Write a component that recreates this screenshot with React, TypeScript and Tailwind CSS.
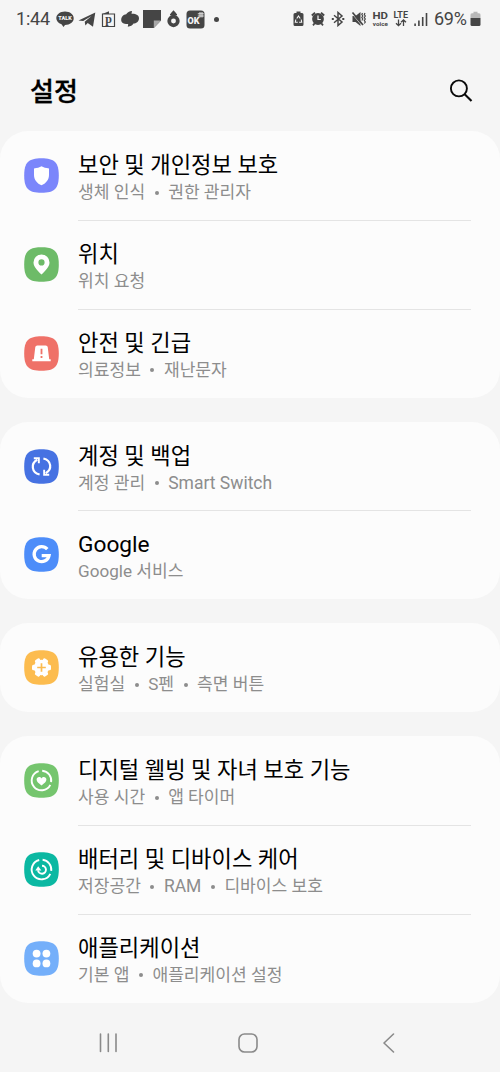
import React from 'react';

type Item = {
  title: string;
  parts: string[];
  color: string;
  icon: React.ReactNode;
};

const ICONS = {
  shield: <path fill="#fff" d="M17.500 8.300C19.500 9.600 22 10.200 25 10.400V17c0 5-3.300 8.500-7.500 10.300C13.300 25.500 10 22 10 17v-6.600c3-.2 5.500-.8 7.500-2.100z" />,
  pin: <path fill="#fff" fillRule="evenodd" d="M17.500 7.400a8 8 0 0 1 8 8c0 4.600-4.300 8.300-8 12.100-3.700-3.800-8-7.500-8-12.100a8 8 0 0 1 8-8zm0 4.900a3.100 3.100 0 1 0 0 6.200 3.100 3.100 0 0 0 0-6.200z" />,
  siren: (
    <>
      <path fill="#fff" d="M13.300 9.400h8.400a2 2 0 0 1 2 1.700l1.500 12.200h1.500v1.900H8.300v-1.900h1.500l1.500-12.200a2 2 0 0 1 2-1.700z" />
      <path stroke="#ef7168" strokeWidth="1.800" d="M17.500 12.800v5.500M17.500 20v1.900" />
    </>
  ),
  sync: (
    <>
      <g fill="none" stroke="#fff" strokeWidth="2.200">
        <path d="M15.600 25.500C7.500 23.500 6.500 14.500 13.300 10.800" />
        <path d="M19.400 9.500c8.100 2 9.100 11 2.300 14.700" />
      </g>
      <path fill="#fff" d="M9.800 8.300h6v6h-1.900v-4.100H9.800zM25.200 26.700h-6v-6h1.900v4.100h4.100z" />
    </>
  ),
  google: (
    <path fill="none" stroke="#fff" strokeWidth="3.300" d="M23.300 12.200A7.500 7.500 0 1 0 25 18.600H17.700" />
  ),
  flower: (
    <>
      <g fill="#fff">
        <circle cx="17.500" cy="17.500" r="7.700" />
        <rect x="14.700" y="8" width="5.600" height="19" rx="1.500" transform="rotate(30 17.500 17.500)" />
        <rect x="14.700" y="8" width="5.600" height="19" rx="1.500" transform="rotate(90 17.500 17.500)" />
        <rect x="14.700" y="8" width="5.600" height="19" rx="1.500" transform="rotate(150 17.500 17.500)" />
      </g>
      <path stroke="#fcbc4f" strokeWidth="1.700" d="M17.500 13.200v8.600M13.200 17.500h8.600" />
    </>
  ),
  wellbeing: (
    <>
      <g fill="none" stroke="#fff" strokeWidth="1.900">
        <path d="M14.700 8.100A9.800 9.800 0 1 0 26.300 21.800" />
        <path d="M18.200 7.700A9.800 9.800 0 0 1 27.100 19.200" />
      </g>
      <path fill="#fff" d="M17.500 22.500c-3-2.200-4.900-3.700-4.900-5.900 0-2.800 3.500-3.500 4.900-1.200 1.400-2.300 4.900-1.600 4.900 1.200 0 2.200-1.900 3.700-4.900 5.900z" />
    </>
  ),
  care: (
    <>
      <g fill="none" stroke="#fff" strokeWidth="1.900">
        <path d="M15.200 8A9.800 9.800 0 1 0 26.300 21.800" />
        <path d="M18.600 7.800A9.800 9.800 0 0 1 27.200 18.800" />
        <path d="M18 13.700a4 4 0 1 1-4 4.600" />
      </g>
      <path fill="#fff" d="M14.200 14.300l3.200 4.300h-6.100z" />
    </>
  ),
  apps: (
    <g fill="#fff">
      <circle cx="12.600" cy="12.600" r="3.900" />
      <circle cx="22.400" cy="12.600" r="3.900" />
      <circle cx="12.600" cy="22.400" r="3.900" />
      <circle cx="22.400" cy="22.400" r="3.900" />
    </g>
  ),
};

const GROUPS: Item[][] = [
  [
    { title: '보안 및 개인정보 보호', parts: ['생체 인식', '권한 관리자'], color: '#7b86fb', icon: ICONS.shield },
    { title: '위치', parts: ['위치 요청'], color: '#6dbb68', icon: ICONS.pin },
    { title: '안전 및 긴급', parts: ['의료정보', '재난문자'], color: '#ef7168', icon: ICONS.siren },
  ],
  [
    { title: '계정 및 백업', parts: ['계정 관리', 'Smart Switch'], color: '#4672e2', icon: ICONS.sync },
    { title: 'Google', parts: ['Google 서비스'], color: '#4d8df9', icon: ICONS.google },
  ],
  [{ title: '유용한 기능', parts: ['실험실', 'S펜', '측면 버튼'], color: '#fcbc4f', icon: ICONS.flower }],
  [
    { title: '디지털 웰빙 및 자녀 보호 기능', parts: ['사용 시간', '앱 타이머'], color: '#75c56e', icon: ICONS.wellbeing },
    { title: '배터리 및 디바이스 케어', parts: ['저장공간', 'RAM', '디바이스 보호'], color: '#0bb8a2', icon: ICONS.care },
    { title: '애플리케이션', parts: ['기본 앱', '애플리케이션 설정'], color: '#74affa', icon: ICONS.apps },
  ],
];

const isLatin = (text: string) => /^[A-Za-z ]+$/.test(text);

const StatusBar = () => (
  <div className="h-[38px] flex items-center pl-[16px] pr-[19px] text-[#454545]">
    <span className="w-[40px] text-[18px] leading-none tracking-[-0.2px]">1:44</span>
    <svg width="18" height="18" viewBox="0 0 18 18" fill="currentColor">
      <path d="M9 1.500c5 0 8.700 2.900 8.700 6.700S14 14.900 9 14.900L7.500 17l-2-2.700C2.200 12.900.3 10.800.3 8.200.3 4.400 4 1.500 9 1.500z" />
      <text x="9" y="10.300" textAnchor="middle" fontSize="5.500" fontWeight="900" fill="#f5f5f5">TALK</text>
    </svg>
    <svg className="ml-[4px]" width="18" height="18" viewBox="0 0 18 18" fill="currentColor">
      <path d="M.5 10.500 17.300 2.500 15 16.700 9.700 13 7.400 15.600 6.700 11.800 13.500 6 5.200 11z" />
    </svg>
    <svg className="ml-[5px]" width="15" height="18" viewBox="0 0 15 18">
      <path d="M1.500 4h12v12.500h-12z" fill="none" stroke="currentColor" strokeWidth="1.200" />
      <path d="M1.300 4 8 1.300V4z" fill="currentColor" />
      <text x="7.500" y="13" textAnchor="middle" fontFamily="Liberation Serif" fontSize="12" fontWeight="700" fill="currentColor">p</text>
    </svg>
    <svg className="ml-[5px]" width="18" height="18" viewBox="0 0 18 18" fill="currentColor">
      <path d="M11 1 10.500 3.800C15 3.600 18 5.200 18 8.200c0 3.500-3 5.200-5.500 5.400-1 1.700-3 2.900-5.700 3.200l.4-2.800C3 14.200.2 12.900.2 10c0-3.500 2.300-5.300 5-5.700C6.300 2.200 8.500 1.200 11 1z" />
    </svg>
    <svg className="ml-[4px]" width="18" height="18" viewBox="0 0 18 18">
      <path d="M0 0h18v10.500L10.800 18H0z" fill="currentColor" />
      <path d="M10.800 18v-7.500H18z" fill="#a8a8a8" />
    </svg>
    <svg className="ml-[5px]" width="15" height="18" viewBox="0 0 15 18">
      <path d="M7.500.3 10 3v2.300H5V3z" fill="currentColor" />
      <path d="M4 4.500h7" stroke="currentColor" strokeWidth="1.600" />
      <circle cx="7.500" cy="11" r="4.300" fill="none" stroke="currentColor" strokeWidth="3.700" />
    </svg>
    <svg className="ml-[5px]" width="19" height="19" viewBox="0 0 19 19">
      <rect x=".5" y=".5" width="18" height="18" rx="3.500" fill="currentColor" />
      <text x="7.500" y="13.800" textAnchor="middle" fontSize="9" fontWeight="900" fill="#f5f5f5">OK</text>
      <path d="M14 2v5.500M16 2v5.500M11.800 3.800h6M11.800 6h6" stroke="#f5f5f5" strokeWidth=".9" />
    </svg>
    <span className="ml-[9px] w-[5px] h-[5px] rounded-full bg-[#454545]" />

    <svg className="ml-auto" width="11" height="16" viewBox="0 0 11 16">
      <path d="M3.500.5h4V2H9a1.500 1.500 0 0 1 1.500 1.500v10A1.500 1.500 0 0 1 9 15H2A1.500 1.500 0 0 1 .5 13.500v-10A1.500 1.500 0 0 1 2 2h1.500z" fill="currentColor" />
      <path d="M3.800 7.500l1.700-2.600 1.700 2.600M8.200 8.500l.5 2.700-2.600.1M4.800 11.300l-2.500-.1.500-2.700" fill="none" stroke="#f5f5f5" strokeWidth="1.100" />
    </svg>
    <svg className="ml-[7px]" width="14" height="16" viewBox="0 0 14 16">
      <circle cx="7" cy="8" r="5.900" fill="currentColor" />
      <path d="M.8 4.500 4 1.600M13.200 4.500 10 1.600M3.500 12.500 2 14.300M10.500 12.500 12 14.300" stroke="currentColor" strokeWidth="1.800" />
      <path d="M7 4.500v4h2.800" fill="none" stroke="#f5f5f5" strokeWidth="1.200" />
    </svg>
    <svg className="ml-[6px]" width="14" height="16" viewBox="0 0 14 16" fill="none" stroke="currentColor" strokeWidth="1.500">
      <path d="M3 4.300l8 6.700-4 3.500v-13L11 5l-8 6.700" />
      <path d="M.8 8h2M11.300 8h2" strokeWidth="2" />
    </svg>
    <svg className="ml-[6px]" width="16" height="16" viewBox="0 0 16 16">
      <path d="M1.500 5H4.500L9.500 1v14L4.500 11H1.500z" fill="currentColor" />
      <path d="M1 2.700 10.800 14.500" stroke="#f5f5f5" strokeWidth=".7" />
      <path d="M1.500 1.500 12 14" stroke="currentColor" strokeWidth="1.700" />
      <path d="M11.500 2l-.7 1.500 1 1.500-1 1.500 1 1.500-1 1.500M14 2l-.7 1.500 1 1.500-1 1.500 1 1.500-1 1.500 1 1.500-1 1.500" fill="none" stroke="currentColor" strokeWidth="1.200" />
    </svg>
    <svg className="ml-[5px]" width="17" height="20" viewBox="0 0 17 20" fill="currentColor">
      <text x=".5" y="9.800" fontSize="9.500" fontWeight="700" textLength="15.500" lengthAdjust="spacingAndGlyphs">HD</text>
      <text x=".8" y="16.600" fontSize="5.800" fontWeight="700" textLength="15" lengthAdjust="spacingAndGlyphs">voice</text>
    </svg>
    <svg className="ml-[4px]" width="16" height="18" viewBox="0 0 16 18" fill="currentColor">
      <text x=".5" y="8.300" fontSize="8.500" fontWeight="700" textLength="14.500" lengthAdjust="spacingAndGlyphs">LTE</text>
      <path d="M5.500 9.500v6M3 13.300l2.500 2.400L8 13.300M10.500 16V10M8 12.200l2.500-2.400 2.500 2.400" fill="none" stroke="currentColor" strokeWidth="1.300" />
    </svg>
    <svg className="ml-[5px]" width="14" height="15" viewBox="0 0 14 15" fill="currentColor">
      <path d="M.3 11.500h1.600V14H.3zM4.100 8.500h1.600V14H4.100zM7.900 5h1.600v9H7.900zM11.700 1h1.600v13h-1.600z" />
    </svg>
    <span className="ml-[6px] w-[35px] text-[18px] leading-none tracking-[-0.3px]">69%</span>
    <svg className="ml-px" width="11" height="16" viewBox="0 0 11 16">
      <path d="M3.500.8h4v1.500H9A1.500 1.500 0 0 1 10.500 4v3H.5V4A1.500 1.500 0 0 1 2 2.300h1.500z" fill="#b8b8b8" />
      <path d="M.5 7h10v6.500A1.500 1.500 0 0 1 9 15H2a1.500 1.500 0 0 1-1.500-1.500z" fill="currentColor" />
    </svg>
  </div>
);

const Row = ({ item, divided }: { item: Item; divided: boolean }) => (
  <div className="h-[88.860px] flex items-center pl-[24px] pr-[29px]">
    <svg className="shrink-0" width="35" height="35" viewBox="0 0 35 35">
      <path fill={item.color} d="M17.500.2C30.500.2 34.800 4.500 34.800 17.500S30.500 34.800 17.500 34.800.2 30.500.2 17.500 4.500.2 17.500.2z" />
      {item.icon}
    </svg>
    <div className={`ml-[18.500px] h-full flex-1 flex flex-col pt-[19px] border-t ${divided ? 'border-[#e4e4e4]' : 'border-transparent'}`}>
      <div className={`pl-[0.500px] leading-[29px] text-black whitespace-nowrap ${isLatin(item.title) ? 'text-[22.700px]' : 'text-[22.200px]'}`}>{item.title}</div>
      <div className="pl-[0.500px] text-[17.100px] leading-[25px] text-[#8d8d8d] whitespace-nowrap flex">
        {item.parts.map((part, i) => (
          <React.Fragment key={part}>
            {i > 0 && <span className="w-[23px] flex items-center justify-center"><span className="w-[4px] h-[4px] rounded-full bg-[#8d8d8d]" /></span>}
            <span className={isLatin(part) ? 'text-[17.500px]' : ''}>{part}</span>
          </React.Fragment>
        ))}
      </div>
    </div>
  </div>
);

export default function App() {
  return (
    <div lang="ko" className="w-[500px] h-[1072px] bg-[#f5f5f5] overflow-hidden flex flex-col font-[Roboto,'Noto_Sans_CJK_KR',sans-serif]">
      <StatusBar />
      <header className="h-[93px] pt-[12px] pl-[30px] pr-[27px] flex items-center justify-between">
        <h1 className="pt-[2px] text-[26px] leading-none font-medium text-black [-webkit-text-stroke:0.300px_black]">설정</h1>
        <svg width="24" height="24" viewBox="0 0 24 24" fill="none" stroke="#0a0a0a" strokeWidth="1.900">
          <circle cx="9.900" cy="9.400" r="8" />
          <path d="M15.700 15.200 22.500 22" strokeWidth="2.100" />
        </svg>
      </header>

      <main className="flex flex-col gap-[24px]">
        {GROUPS.map((group, i) => (
          <section key={i} className="bg-[#fcfcfc] rounded-[28px]">
            {group.map((item, j) => (
              <Row key={item.title} item={item} divided={j > 0} />
            ))}
          </section>
        ))}
      </main>

      <nav className="flex-1 pt-[12px] pl-[99px] flex items-center">
        <svg width="19" height="20" viewBox="0 0 19 20" stroke="#8a8a8a" strokeWidth="1.600" strokeLinecap="round">
          <path d="M1.500 1v17.500M9.300 1v17.500M17 1v17.500" />
        </svg>
        <svg className="ml-[120px]" width="20" height="20" viewBox="0 0 20 20" fill="none" stroke="#8a8a8a" strokeWidth="1.600">
          <rect x="1" y="1" width="18" height="18" rx="5.500" />
        </svg>
        <svg className="ml-[124px]" width="13" height="20" viewBox="0 0 13 20" fill="none" stroke="#8a8a8a" strokeWidth="1.600" strokeLinecap="round" strokeLinejoin="round">
          <path d="M11.500 1 2 10l9.500 9" />
        </svg>
      </nav>
    </div>
  );
}
